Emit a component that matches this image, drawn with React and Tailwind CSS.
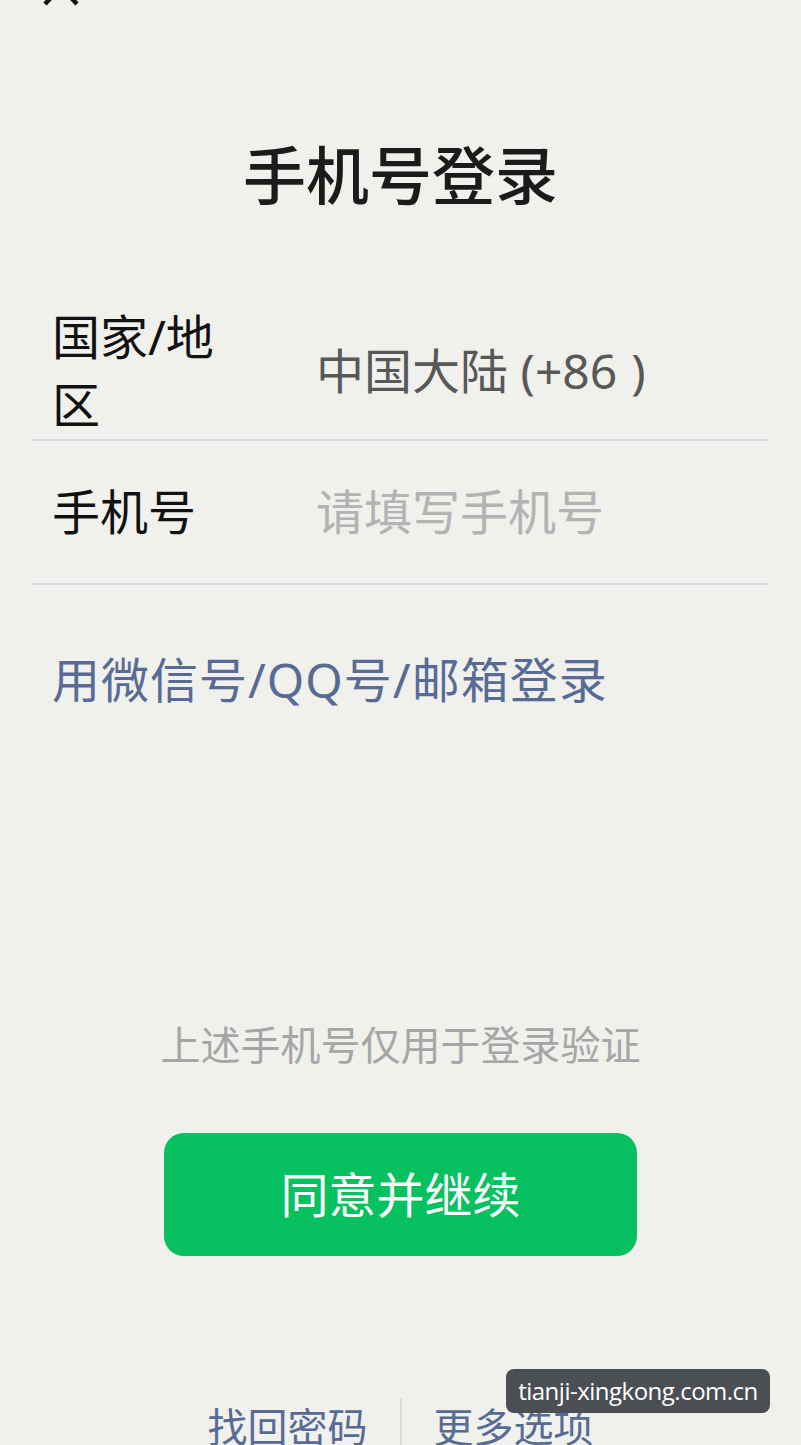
import React from "react";

const cjk = { fontFamily: '"Noto Sans", "Noto Sans CJK SC", sans-serif' };

export default function App() {
  return (
    <div
      className="relative w-[801px] h-[1445px] overflow-hidden bg-[#f0f0ec] flex flex-col"
      style={cjk}
    >
      {/* close icon, cut off at top */}
      <svg
        className="block mt-[-32px] ml-[41px] w-[40px] h-[38px] shrink-0"
        viewBox="0 0 40 38"
        fill="none"
        stroke="#111"
        strokeWidth="4.5"
        strokeLinecap="butt"
      >
        <path d="M4 2 L36 36" />
        <path d="M36 2 L4 36" />
      </svg>

      <h1 className="mt-[137px] text-center text-[63px] leading-[63px] font-medium text-[#1b1b1b]">
        手机号登录
      </h1>

      <div className="mt-[97px] mx-[32px] flex flex-col">
        <div className="flex items-center border-b-2 border-[#d9d9e2]">
          <div className="w-[284px] shrink-0 pl-[20px] pr-[84px] text-[48px] leading-[68px] text-[#111] break-all">
            国家/地区
          </div>
          <div className="text-[48px] leading-[68px] text-[#585858]">
            中国大陆 (+86<span className="ml-[14px]">)</span>
          </div>
        </div>
        <div className="flex items-center h-[144px] border-b-2 border-[#d9d9e2]">
          <div className="w-[284px] shrink-0 pl-[20px] text-[48px] leading-[68px] text-[#111]">
            手机号
          </div>
          <div className="text-[48px] leading-[68px] text-[#b3b3b3]">
            请填写手机号
          </div>
        </div>
      </div>

      <div className="mt-[71px] pl-[52px] text-[48px] leading-[48px] tracking-[1px] text-[#576b95]">
        用微信号/QQ号/邮箱登录
      </div>

      <div className="mt-[321px] text-center text-[40px] leading-[40px] text-[#a6a6a6]">
        上述手机号仅用于登录验证
      </div>

      <button className="mt-[68px] mx-auto w-[473px] h-[123px] shrink-0 rounded-[20px] bg-[#07c160] text-white text-[48px] leading-[48px] flex items-center justify-center">
        同意并继续
      </button>

      <div className="mt-[142px] flex items-start justify-center gap-[32px]">
        <div className="mt-[9px] text-[40px] leading-[40px] text-[#576b95]">找回密码</div>
        <div className="w-[2px] h-[60px] bg-[#dcdcdc]" />
        <div className="mt-[9px] text-[40px] leading-[40px] text-[#576b95]">更多选项</div>
      </div>

      {/* watermark overlay */}
      <div
        className="absolute left-[506px] top-[1369px] w-[264px] h-[44px] rounded-[8px] bg-[#4b4e53] flex items-center justify-center text-white text-[24px] leading-[24px] tracking-[-0.5px]"
        style={{ fontFamily: '"Open Sans", "Noto Sans", sans-serif' }}
      >
        tianji-xingkong.com.cn
      </div>
    </div>
  );
}
